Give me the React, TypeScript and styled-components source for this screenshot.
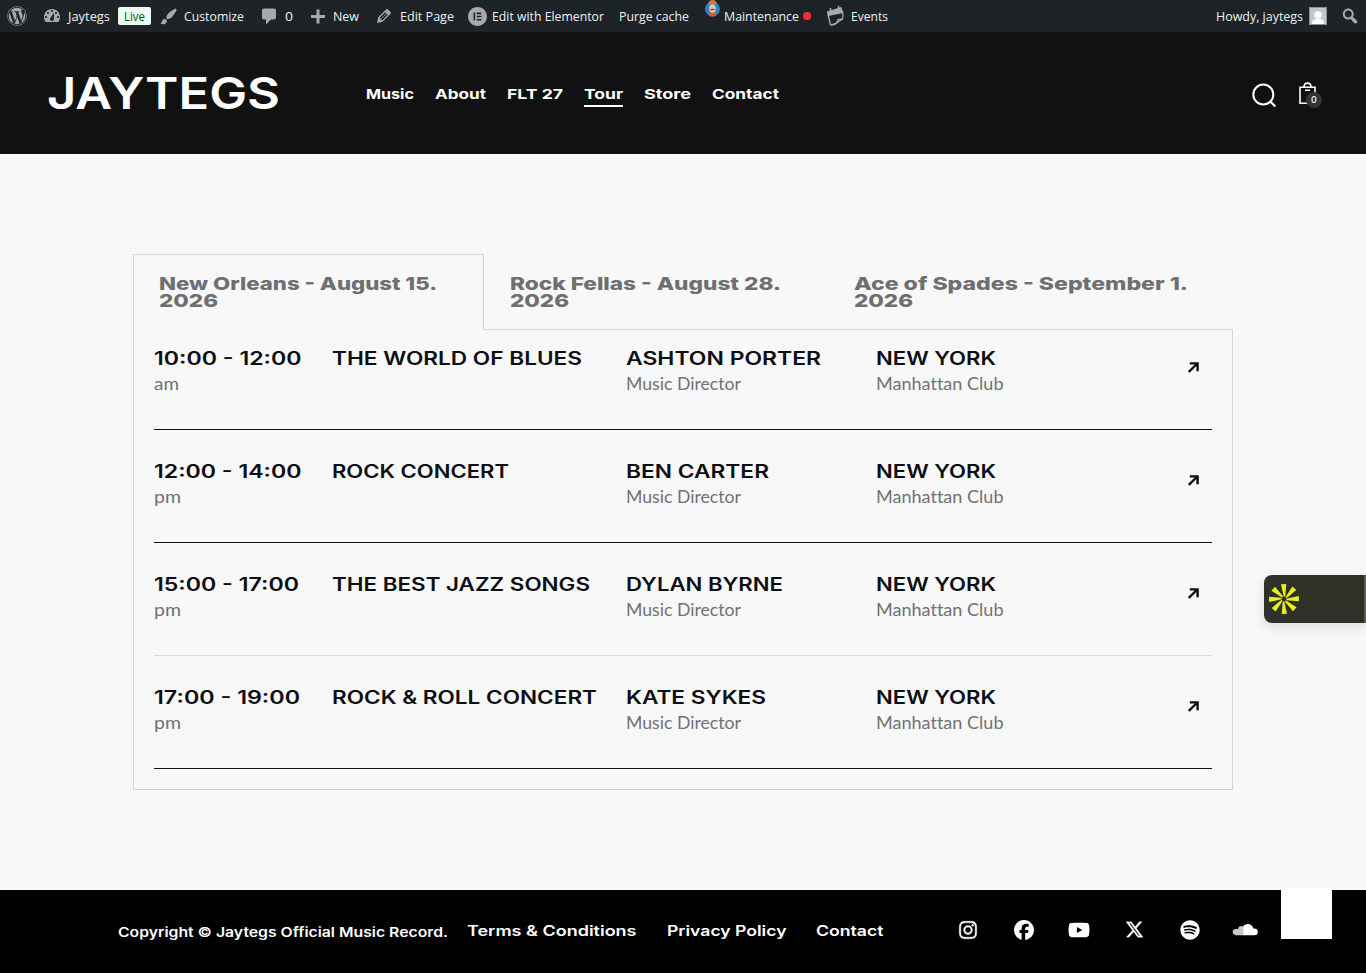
import React, { useLayoutEffect, useRef, useState } from 'react';
import styled, { createGlobalStyle } from 'styled-components';
import { FaWordpress, FaInstagram, FaFacebook, FaYoutube, FaXTwitter, FaSpotify, FaElementor } from 'react-icons/fa6';

const GlobalStyle = createGlobalStyle`
  * { box-sizing: border-box; }
  html, body { margin: 0; padding: 0; }
  body { background: #f8f8f8; font-family: Inter, "Liberation Sans", sans-serif; overflow: hidden; }
`;

const FitBox = styled.span<{ $w: number }>`
  display: block;
  flex: none;
  width: ${(p) => p.$w}px;
  white-space: nowrap;
`;
const FitInner = styled.span`
  display: inline-block;
  vertical-align: top;
  transform-origin: 0 50%;
`;

/* Stretches its text horizontally so that it takes exactly the given width. */
function Fit({ w, children }: { w: number; children: React.ReactNode }) {
  const ref = useRef<HTMLSpanElement>(null);
  const [scale, setScale] = useState(1);
  useLayoutEffect(() => {
    const measure = () => {
      if (ref.current && ref.current.offsetWidth) {
        const natural = parseFloat(getComputedStyle(ref.current).width);
        setScale(w / natural);
      }
    };
    measure();
    document.fonts.ready.then(measure);
  }, [w]);
  return (
    <FitBox $w={w}>
      <FitInner ref={ref} style={{ transform: `scaleX(${scale})` }}>{children}</FitInner>
    </FitBox>
  );
}

const Page = styled.div`
  width: 1366px;
  height: 973px;
  display: flex;
  flex-direction: column;
`;

/* ---------- admin bar ---------- */
const AdminBar = styled.div`
  height: 32px;
  flex: none;
  background: #1d2327;
  color: #f0f0f1;
  display: flex;
  align-items: center;
  font: 400 13px/32px "Open Sans", "Noto Sans", sans-serif;
  padding: 0 6px 0 7px;
`;
const AdminItem = styled.div<{ $ml?: number; $gap?: number }>`
  display: flex;
  align-items: center;
  height: 32px;
  flex: none;
  margin-left: ${(p) => p.$ml ?? 0}px;
  gap: ${(p) => p.$gap ?? 6}px;
  svg { display: block; flex: none; color: #a7aaad; fill: currentColor; }
`;
const Live = styled.span`
  height: 18px;
  width: 33px;
  margin-left: 2px;
  border-radius: 2px;
  background: #edfaef;
  color: #005c12;
  display: flex;
  justify-content: center;
  line-height: 18px;
`;
const RedDot = styled.span`
  width: 8px;
  height: 8px;
  border-radius: 50%;
  background: #fb2c36;
`;
const Mascot = styled.svg`
  align-self: flex-start;
`;
const Spacer = styled.div`
  flex: 1;
`;

const Dash = ({ d, size = 20 }: { d: string; size?: number }) => (
  <svg width={size} height={size} viewBox="0 0 20 20"><path d={d} /></svg>
);
const DASHBOARD = 'M3.76 16h12.48c1.1-1.37 1.76-3.11 1.76-5 0-4.42-3.58-8-8-8s-8 3.58-8 8c0 1.89.66 3.63 1.76 5zM10 4c.55 0 1 .45 1 1s-.45 1-1 1-1-.45-1-1 .45-1 1-1zM6 6c.55 0 1 .45 1 1s-.45 1-1 1-1-.45-1-1 .45-1 1-1zm8 0c.55 0 1 .45 1 1s-.45 1-1 1-1-.45-1-1 .45-1 1-1zm-5.37 5.55L12 7v6c0 1.1-.9 2-2 2s-2-.9-2-2c0-.57.24-1.08.63-1.45zM4 10c.55 0 1 .45 1 1s-.45 1-1 1-1-.45-1-1 .45-1 1-1zm12 0c.55 0 1 .45 1 1s-.45 1-1 1-1-.45-1-1 .45-1 1-1z';
const BRUSH = 'M18.33 3.57s.27-.8-.31-1.36c-.53-.52-1.22-.24-1.22-.24-.61.3-5.76 3.47-7.67 5.57-.86.96-2.06 3.79-1.09 4.82.92.98 3.96-.17 4.79-1 2.06-2.06 5.21-7.17 5.5-7.79zM1.4 17.65c2.37-1.56 1.46-3.41 3.23-4.64.93-.65 2.22-.62 3.08.29.63.67.8 2.57-.16 3.46-1.57 1.45-4 1.55-6.15.89z';
const COMMENT = 'M5 2.5h10c1.1 0 2 .9 2 2v7c0 1.1-.9 2-2 2h-3l-5 5v-5H5c-1.1 0-2-.9-2-2v-7c0-1.1.9-2 2-2z';
const PLUS = 'M17 9v3h-5.5v5.5h-3V12H3V9h5.500V3.500h3V9z';
const PENCIL = 'M13.89 3.39l2.71 2.72c.46.46.42 1.24.03 1.64l-8.01 8.02-5.56 1.16 1.16-5.58s7.6-7.63 7.99-8.03c.39-.39 1.22-.39 1.68.07zm-2.73 2.79l-5.59 5.61 1.11 1.11 5.54-5.65zm-2.97 8.23l5.58-5.6-1.07-1.08-5.59 5.6z';
const SEARCH = 'M12.14 4.18c1.87 1.87 2.11 4.75.72 6.89.12.1.22.21.36.31.2.16.47.36.81.59.34.24.56.39.66.47.42.31.73.57.94.78.32.32.6.65.84 1 .25.35.44.69.59 1.04.14.35.21.68.18 1-.02.32-.14.59-.36.81s-.49.34-.81.36c-.31.02-.65-.04-.99-.19-.35-.14-.7-.34-1.04-.59-.35-.24-.68-.52-1-.84-.21-.21-.47-.52-.77-.93-.1-.13-.25-.35-.47-.66-.22-.32-.4-.57-.56-.78-.16-.2-.29-.35-.44-.5-2.07 1.09-4.69.76-6.44-.98-2.14-2.15-2.14-5.64 0-7.78 2.15-2.15 5.63-2.15 7.78 0zm-1.41 6.36c1.36-1.37 1.36-3.58 0-4.95-1.37-1.37-3.59-1.37-4.95 0-1.37 1.37-1.37 3.58 0 4.95 1.36 1.37 3.58 1.37 4.95 0z';

/* ---------- site header ---------- */
const Header = styled.header`
  height: 122px;
  flex: none;
  background: #111;
  color: #fff;
  display: flex;
  align-items: center;
  padding: 0 44px 0 47px;
`;
const Logo = styled.div`
  font-size: 44px;
  font-weight: 600;
  line-height: 60px;
`;
const Nav = styled.nav`
  display: flex;
  gap: 21px;
  margin-left: 86px;
  padding-top: 4px;
`;
const NavLink = styled.a<{ $active?: boolean }>`
  font-size: 13.500px;
  font-weight: 700;
  line-height: 20px;
  padding: 1px 0;
  border-bottom: 2px solid ${(p) => (p.$active ? '#fff' : 'transparent')};
`;
const HeaderIcons = styled.div`
  display: flex;
  align-items: flex-start;
  gap: 21px;
  margin-left: auto;
  padding-top: 4px;
`;
const Cart = styled.div`
  position: relative;
  width: 24px;
  height: 28px;
`;
const CartCount = styled.span`
  position: absolute;
  left: 8px;
  top: 11px;
  width: 16px;
  height: 16px;
  border-radius: 50%;
  background: #333;
  font: 500 9px/16px Inter, sans-serif;
  text-align: center;
`;

/* ---------- schedule ---------- */
const Main = styled.main`
  flex: 1;
  padding: 100px 133px 0;
`;
const TabList = styled.div`
  display: flex;
  height: 75px;
`;
const Tab = styled.div<{ $w: number; $active?: boolean }>`
  width: ${(p) => p.$w}px;
  height: 76px;
  flex: none;
  z-index: 1;
  padding: 20px 25px 0;
  border: 1px solid ${(p) => (p.$active ? '#d4d6d6' : 'transparent')};
  border-bottom: 0;
  background: ${(p) => (p.$active ? '#f8f8f8' : 'transparent')};
  color: #6d6f72;
  font-size: 18px;
  font-weight: 800;
  line-height: 17px;
`;
const Panel = styled.div`
  height: 461px;
  border: 1px solid #d4d6d6;
  padding: 0 20px;
`;
const Row = styled.div<{ $first?: boolean; $light?: boolean }>`
  display: grid;
  grid-template-columns: 178px 294px 249.500px 1fr 24.500px;
  height: ${(p) => (p.$first ? 100 : 113)}px;
  padding-top: ${(p) => (p.$first ? 19 : 32)}px;
  border-bottom: 1px solid ${(p) => (p.$light ? '#d9dbdb' : '#111')};
`;
const Title = styled.div`
  color: #0d0f14;
  font-size: 18px;
  font-weight: 600;
  line-height: 20px;
  height: 20px;
`;
const Sub = styled.div`
  margin-top: 5px;
  color: #707275;
  font: 400 16.500px/20px Lato, sans-serif;
  font-variant-ligatures: none;
`;
const Arrow = styled.svg`
  margin-top: 12.500px;
`;

/* ---------- footer ---------- */
const Footer = styled.footer`
  height: 83px;
  flex: none;
  background: #000;
  color: #fff;
  display: flex;
  padding-left: 118px;
  font-size: 14px;
  font-weight: 600;
  line-height: 20px;
`;
const FooterLinks = styled.div`
  display: flex;
  gap: 30px;
  padding-top: 31px;
  margin-left: 19px;
`;
const Copyright = styled.div`
  padding-top: 32px;
  font-size: 13px;
`;
const Socials = styled.div`
  display: flex;
  margin-left: 57px;
  padding-top: 29px;
`;
const Social = styled.a`
  width: 55.400px;
  height: 21px;
  display: flex;
  align-items: center;
  justify-content: center;
  svg { display: block; flex: none; }
`;
const ScrollTop = styled.div`
  position: fixed;
  left: 1281px;
  top: 888px;
  width: 51px;
  height: 51px;
  background: #fff;
`;
const SideWidget = styled.div`
  position: fixed;
  right: 0;
  top: 575px;
  width: 102px;
  height: 48px;
  border-radius: 8px 0 0 8px;
  background: #2f3028;
  border-right: 2px solid #5b5b50;
  box-shadow: 0 4px 12px rgba(0, 0, 0, 0.12);
  padding: 9px 5px;
`;

const shows = [
  { time: '10:00 - 12:00', tw: 147.5, ap: 'am', aw: 25, name: 'THE WORLD OF BLUES', nw: 250, who: 'ASHTON PORTER', ww: 195 },
  { time: '12:00 - 14:00', tw: 147.5, ap: 'pm', aw: 27, name: 'ROCK CONCERT', nw: 177, who: 'BEN CARTER', ww: 143 },
  { time: '15:00 - 17:00', tw: 145, ap: 'pm', aw: 27, name: 'THE BEST JAZZ SONGS', nw: 258, who: 'DYLAN BYRNE', ww: 157 },
  { time: '17:00 - 19:00', tw: 146, ap: 'pm', aw: 27, name: 'ROCK & ROLL CONCERT', nw: 265, who: 'KATE SYKES', ww: 140 },
];
const nav: [string, number][] = [['Music', 48], ['About', 51], ['FLT 27', 56], ['Tour', 39], ['Store', 47], ['Contact', 67]];

export default function App() {
  return (
    <Page>
      <GlobalStyle />
      <AdminBar>
        <AdminItem><FaWordpress size={20} /></AdminItem>
        <AdminItem $ml={15}><Dash d={DASHBOARD} /><Fit w={42}>Jaytegs</Fit><Live><Fit w={21}>Live</Fit></Live></AdminItem>
        <AdminItem $ml={8}><Dash d={BRUSH} size={19} /><Fit w={60}>Customize</Fit></AdminItem>
        <AdminItem $ml={15}><Dash d={COMMENT} /><Fit w={8}>0</Fit></AdminItem>
        <AdminItem $ml={15} $gap={5}><Dash d={PLUS} /><Fit w={26}>New</Fit></AdminItem>
        <AdminItem $ml={15}><Dash d={PENCIL} /><Fit w={54}>Edit Page</Fit></AdminItem>
        <AdminItem $ml={14} $gap={5}><FaElementor size={19} /><Fit w={112}>Edit with Elementor</Fit></AdminItem>
        <AdminItem $ml={15}><Fit w={70}>Purge cache</Fit></AdminItem>
        <AdminItem $ml={16} $gap={4}>
          <Mascot width="15" height="17" viewBox="0 0 15 17">
            <ellipse cx="7.500" cy="9" rx="7.500" ry="7" fill="#2186cf" />
            <path d="M2.500 13q5-1.500 10 0l-1.500 3q-3.500 1.500-7 0z" fill="#d8563b" />
            <ellipse cx="7.500" cy="8.500" rx="3.300" ry="4.300" fill="#f0c3a2" />
            <path d="M2.500 4.500Q4 0 7.500 0t5 4.500q-5-1.500-10 0z" fill="#d97932" />
            <path d="M5.500 9.800q2-1 4 0" stroke="#66372a" strokeWidth="1.200" />
          </Mascot>
          <Fit w={75}>Maintenance</Fit><RedDot />
        </AdminItem>
        <AdminItem $ml={15}>
          <svg width="19" height="22" viewBox="0 0 19 22">
            <path d="M1 6.500L15.500 2 17 8 2.500 11z" />
            <path d="M4.500 3v4M12.500.8v4" stroke="#a7aaad" strokeWidth="1.600" />
            <path d="M1.500 7L4.500 20q4.500 0 7.500-3l4.500-3q1-3 0-8M4.500 20l6-2 1.500-3.500 4.500-.5" fill="none" stroke="#a7aaad" strokeWidth="1.300" />
          </svg>
          <Fit w={37}>Events</Fit>
        </AdminItem>
        <Spacer />
        <AdminItem>
          <Fit w={87}>Howdy, jaytegs</Fit>
          <svg width="18" height="18" viewBox="0 0 18 18">
            <path d="M0 0h18v18H0z" fill="#c6c6c6" />
            <circle cx="9" cy="8" r="3.700" fill="#fff" />
            <path d="M2.800 17q.3-4.500 4-5h4.400q3.700.5 4 5z" fill="#fff" />
            <path d="M.5.5h17v17H.5z" fill="none" stroke="#8c8f94" />
          </svg>
        </AdminItem>
        <AdminItem $ml={13}><Dash d={SEARCH} /></AdminItem>
      </AdminBar>

      <Header>
        <Logo><Fit w={233}>JAYTEGS</Fit></Logo>
        <Nav>
          {nav.map(([label, w]) => (
            <NavLink key={label} $active={label === 'Tour'}><Fit w={w}>{label}</Fit></NavLink>
          ))}
        </Nav>
        <HeaderIcons>
          <svg width="26" height="28" viewBox="0 0 26 28" fill="none" stroke="#fff" strokeWidth="2">
            <circle cx="12.300" cy="13.500" r="10" /><path d="M19.300 20.500l5 5" strokeWidth="2.300" />
          </svg>
          <Cart>
            <svg width="20" height="26" viewBox="0 0 20 26" fill="none" stroke="#fff" strokeWidth="1.600">
              <path d="M2 6.300h15v16H2zM6 6C6 .8 13 .8 13 6M7 9.300h5" />
            </svg>
            <CartCount>0</CartCount>
          </Cart>
        </HeaderIcons>
      </Header>

      <Main>
        <TabList>
          <Tab $w={351} $active><Fit w={278}>New Orleans - August 15.</Fit><Fit w={59}>2026</Fit></Tab>
          <Tab $w={343.500}><Fit w={271}>Rock Fellas - August 28.</Fit><Fit w={59}>2026</Fit></Tab>
          <Tab $w={405}><Fit w={334}>Ace of Spades - September 1.</Fit><Fit w={59}>2026</Fit></Tab>
        </TabList>
        <Panel>
          {shows.map((s, i) => (
            <Row key={s.time} $first={i === 0} $light={i === 2}>
              <div><Title><Fit w={s.tw}>{s.time}</Fit></Title><Sub><Fit w={s.aw}>{s.ap}</Fit></Sub></div>
              <div><Title><Fit w={s.nw}>{s.name}</Fit></Title></div>
              <div><Title><Fit w={s.ww}>{s.who}</Fit></Title><Sub><Fit w={115}>Music Director</Fit></Sub></div>
              <div><Title><Fit w={120}>NEW YORK</Fit></Title><Sub><Fit w={127.5}>Manhattan Club</Fit></Sub></div>
              <Arrow width="11" height="11" viewBox="0 0 11 11" fill="none" stroke="#0d0f14" strokeWidth="2.400">
                <path d="M.8 10l8-8M1.800 1.400H9.600v7.800" />
              </Arrow>
            </Row>
          ))}
        </Panel>
      </Main>

      <Footer>
        <Copyright><Fit w={330}>Copyright © Jaytegs Official Music Record.</Fit></Copyright>
        <FooterLinks>
          <Fit w={169.5}>Terms &amp; Conditions</Fit>
          <Fit w={119.5}>Privacy Policy</Fit>
          <Fit w={67.5}>Contact</Fit>
        </FooterLinks>
        <Socials>
          <Social><FaInstagram size={20} stroke="#fff" strokeWidth={10} /></Social>
          <Social><FaFacebook size={20} /></Social>
          <Social><FaYoutube size={22} /></Social>
          <Social><FaXTwitter size={19} stroke="#fff" strokeWidth={8} /></Social>
          <Social><FaSpotify size={20} /></Social>
          <Social>
            <svg width="27" height="13" viewBox="0 0 27 13">
              <path d="M12 12.300H3.500A3.200 3.200 0 0 1 3.200 6Q5 5.500 6 6.300 6.500 3 9 3q1.500 0 3 1z" fill="#c9c9c9" />
              <path d="M11.500 2.500Q13.500 1 15.700 1q4.500 0 5.600 4.500 4.500-.5 4.500 3.300 0 3.500-3.500 3.500H11.500z" fill="#fff" />
            </svg>
          </Social>
        </Socials>
      </Footer>

      <ScrollTop />
      <SideWidget>
        <svg width="30" height="30" viewBox="-15 -15 30 30" fill="#e9f01d">
          {[0, 45, 90, 135, 180, 225, 270, 315].map((a) => (
            <path key={a} transform={`rotate(${a})`} d="M-3-14.800L2.300-15 1.300-3-.2-2z" />
          ))}
        </svg>
      </SideWidget>
    </Page>
  );
}
